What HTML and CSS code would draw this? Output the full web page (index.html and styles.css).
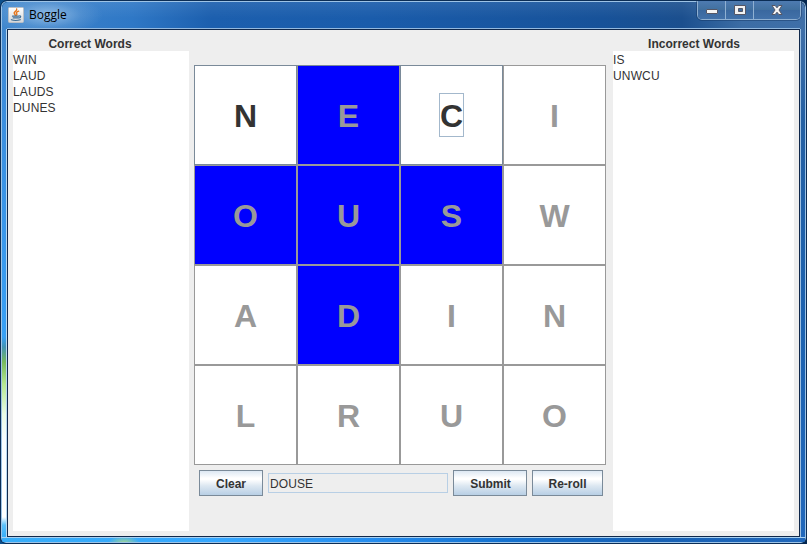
FILE: index.html
```html
<!DOCTYPE html>
<html lang="en">
<head>
<meta charset="utf-8">
<title>Boggle</title>
<link rel="stylesheet" href="styles.css">
</head>
<body>
<div class="window">
  <header class="titlebar">
    <svg class="app-icon" width="16" height="16" viewBox="0 0 16 16">
      <defs><linearGradient id="tile" x1="0" y1="0" x2="0" y2="1"><stop offset="0" stop-color="#fff"/><stop offset="1" stop-color="#d3d5d8"/></linearGradient></defs>
      <rect x=".5" y=".5" width="15" height="15" rx="1" fill="url(#tile)" stroke="#b9bfc7"/>
      <g fill="none" stroke-linecap="round">
        <path d="M8.7 2C9.5 4 5.4 4.6 6.2 6.3C6.5 7 7.3 7.4 7.2 8.3M10.7 4.2C8 5.2 8.1 6 8.8 6.8C9.2 7.5 8.8 7.9 8.3 8.3" stroke="#e5761c" stroke-width="1.4"/>
        <path d="M4.5 9.2H10.8M5.2 10.9H10.2M3.4 12.7C5.3 13.500 10 13.500 12.3 12.700M11.2 9C13.3 8.5 13.1 10.7 11 10.9" stroke="#416f96" stroke-width="1.2"/>
      </g>
    </svg>
    <span class="title">Boggle</span>
    <div class="controls">
      <span class="control"><svg width="14" height="12"><rect x="1.5" y="5.5" width="11" height="4" rx=".5" fill="#f4f4f4" stroke="#555766"/></svg></span>
      <span class="control"><svg width="14" height="12"><path fill-rule="evenodd" d="M1.5 1.5h11v9h-11zM5.5 4.5v3h4v-3z" fill="#f2f2f2" stroke="#555766"/></svg></span>
      <span class="control close"><svg width="14" height="12"><path d="M2 1.5h3.2L7 3.8 8.8 1.5H12L9 6l3 4.500H8.800L7 8.200 5.200 10.500H2L5 6z" fill="#f4f4f4" stroke="#555766"/></svg></span>
    </div>
  </header>
  <div class="side side-left"></div>
  <main class="client">
    <section class="words correct">
      <h2>Correct Words</h2>
      <ul><li>WIN</li><li>LAUD</li><li>LAUDS</li><li>DUNES</li></ul>
    </section>
    <section class="play">
      <div class="board">
        <div class="die ready">N</div><div class="die used lit">E</div><div class="die ready"><span class="focus">C</span></div><div class="die">I</div>
        <div class="die used">O</div><div class="die used">U</div><div class="die used">S</div><div class="die">W</div>
        <div class="die">A</div><div class="die used">D</div><div class="die">I</div><div class="die">N</div>
        <div class="die">L</div><div class="die">R</div><div class="die">U</div><div class="die">O</div>
      </div>
      <div class="actions">
        <button class="clear">Clear</button>
        <div class="entry">DOUSE</div>
        <button class="submit">Submit</button>
        <button class="reroll">Re-roll</button>
      </div>
    </section>
    <section class="words incorrect">
      <h2>Incorrect Words</h2>
      <ul><li>IS</li><li>UNWCU</li></ul>
    </section>
  </main>
  <div class="side side-right"></div>
  <footer class="bottom"></footer>
</div>
</body>
</html>
```
FILE: styles.css
```css
* { box-sizing: border-box; }
body {
  margin: 0;
  width: 807px;
  height: 544px;
  overflow: hidden;
  background: linear-gradient(90deg, #0d4f8c, #04264f);
  font: 12px/16px "Liberation Sans", Arial, sans-serif;
  color: #333;
}
.window {
  width: 807px;
  height: 544px;
  display: grid;
  grid-template: 27px 508px 5px / 5px 793px 5px;
  border: 1px solid #0b2d55;
  border-radius: 7px 7px 6px 6px;
  box-shadow: inset 0 0 0 1px #9dc3e6;
  padding: 1px;
  overflow: hidden;
}
.titlebar {
  grid-column: 1 / 4;
  display: flex;
  align-items: flex-start;
  padding-left: 6px;
  border-radius: 6px 6px 0 0;
  background:
    radial-gradient(ellipse 55px 20px at 46px 13px, rgba(170, 205, 238, .75), rgba(120, 170, 220, .35) 60%, transparent),
    linear-gradient(180deg, rgba(255, 255, 255, .08), transparent 60%),
    linear-gradient(90deg, #4187cd 0, #2f78c6 130px, #1c5fae 210px, #1a5cab 370px, #175299 600px, #1b4f8e 680px, #3c6da5 740px, #3f6fa8 100%);
}
.app-icon { margin-top: 5px; flex: none; }
.title {
  margin: 4px 0 0 5px;
  font: 12px/17px "Open Sans", "Noto Sans", sans-serif;
  color: #000;
}
.controls {
  display: flex;
  margin: -1px 4px 0 auto;
  height: 19px;
  border: 1px solid #8fb0d2;
  border-top: 0;
  border-radius: 0 0 5px 5px;
  outline: 1px solid rgba(16, 45, 88, .4);
}
.control {
  width: 28px;
  padding: 3px 0 0 0;
  border-right: 1px solid #8fb0d2;
  background: linear-gradient(180deg, #4e7bb1, #41709f 48%, #3a689f 50%, #4271a9);
}
.control:first-child { border-bottom-left-radius: 4px; }
.control svg { display: block; margin: 0 auto; }
.close { width: 46px; border-right: 0; border-bottom-right-radius: 4px; }
.side-left {
  background: linear-gradient(180deg, #4187cd 0, #3c8cdb 60px, #3a97ea 200px, #38a0f5 308px, #4394b4 318px, #77b95c 333px, #b5e790 355px, #e9fbe5 385px, #f8fdff 410px, #fff 488px, #5cc1fb 496px, #38aef9 508px);
}
.side-right {
  background: linear-gradient(180deg, #3f6fa8, #2460a3 90px, #1c62b0 300px, #2168bb);
}
.side-left { border-right: 1px solid #b7d8f2; }
.side-right { border-left: 1px solid #9dbfe1; }
.bottom {
  grid-column: 1 / 4;
  border-top: 1px solid #a8d1f2;
  background:
    radial-gradient(ellipse 16px 7px at 122px 5px, rgba(175, 218, 135, .95), transparent),
    linear-gradient(90deg, #38aef9, #35a7ff 220px, #258def 370px, #1472d0 500px, #1761b5 650px, #2168bb);
}
.client {
  display: grid;
  grid-template-columns: 176px 424px 181px;
  padding: 5px;
  background: #eee;
  border: 1px solid #10284b;
  box-shadow: 0 -1px 0 #93b9df;
}
.words { display: flex; flex-direction: column; }
h2 {
  margin: 0;
  height: 16px;
  padding-top: 1px;
  font-size: 12px;
  line-height: 16px;
  text-align: center;
}
.correct h2 { padding-right: 22px; }
.incorrect h2 { padding-right: 19px; }
ul {
  flex: 1;
  margin: 0;
  padding: 1px 0 0;
  list-style: none;
  background: #fff;
  letter-spacing: .15px;
}
.play { padding: 30px 7px 0 5px; }
.board {
  display: grid;
  grid-template: repeat(4, 100px) / repeat(4, 103px);
}
.die {
  display: flex;
  align-items: center;
  justify-content: center;
  padding-top: 2px;
  border: 1px solid #999;
  background: #fff;
  color: #999;
  font-size: 32px;
  line-height: 36px;
  font-weight: bold;
}
.ready { color: #333; border-color: #7a8a99; }
.used { background: #00f; }
.lit { border-top-color: #7a8a99; }
.focus {
  height: 44px;
  margin-top: -2px;
  padding-top: 4px;
  width: 25px;
  text-align: center;
  border: 1px solid #a3b8cc;
}
.actions {
  display: flex;
  align-items: center;
  gap: 5px;
  padding: 5px 0 0 5px;
}
button {
  height: 26px;
  padding: 2px 0 0;
  border: 1px solid #7a8a99;
  background: linear-gradient(180deg, #dde8f3 0, #fff 30%, #fff 35%, #dce7f1 62%, #b8cfe5);
  color: #333;
  font: bold 12px/16px "Liberation Sans", Arial, sans-serif;
}
.clear { width: 64px; }
.submit { width: 74px; padding-left: 1px; }
.reroll { width: 71px; }
.entry {
  width: 180px;
  height: 20px;
  padding: 2px 1px 0;
  border: 1px solid #b8cfe5;
  background: #eee;
  letter-spacing: .1px;
}
```
